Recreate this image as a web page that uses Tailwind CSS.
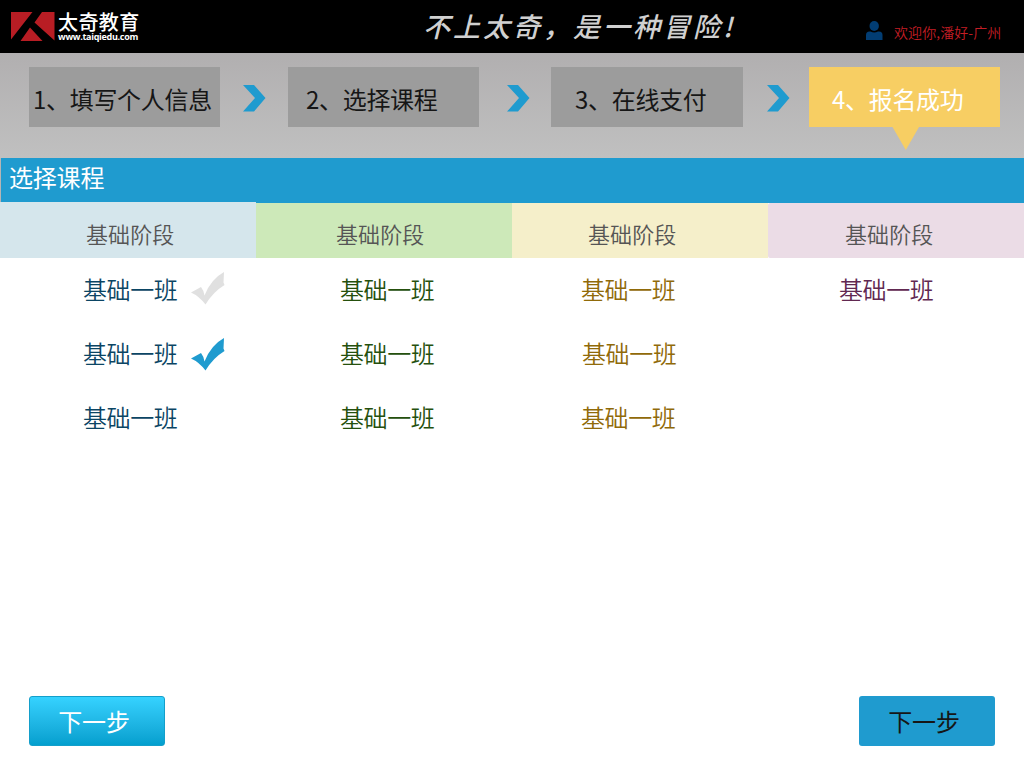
<!DOCTYPE html>
<html lang="zh-CN">
<head>
<meta charset="utf-8">
<title>太奇教育</title>
<script src="https://cdn.jsdelivr.net/npm/@tailwindcss/browser@4"></script>
</head>
<body class="bg-white">
<div class="w-[1024px] h-[768px] flex flex-col overflow-hidden whitespace-nowrap font-['Noto_Sans_CJK_SC',sans-serif]">
  <header class="h-[53px] shrink-0 bg-black flex items-start">
    <svg class="ml-[11px] mt-3 shrink-0" width="44" height="29" viewBox="0 0 44 29"><path fill="#b81d24" d="M0 0H21.500L0 27.500ZM31 0H43.500V28.500L23.500 10.500ZM19 15.500 31.500 29H9.500Z"/></svg>
    <div class="ml-[3px] mt-[11px] w-[84px] flex flex-col text-white">
      <span class="text-[20px] leading-[21px] font-medium tracking-[0.4px]">太奇教育</span>
      <span class="text-[9px] leading-[9px] font-bold tracking-[-0.3px] font-['Open_Sans',sans-serif]">www.taiqiedu.com</span>
    </div>
    <div class="ml-[281px] mt-[9px] w-[322px] text-[27px] leading-[34px] tracking-[3px] italic font-medium text-[#d0d0d0]">不上太奇，是一种冒险!</div>
    <svg class="ml-[121px] mt-[21px] shrink-0" width="17" height="19" viewBox="0 0 17 19"><ellipse cx="8.200" cy="5" rx="4.700" ry="5" fill="#023d73"/><path fill="#023d73" d="M0 19V14Q0 10.500 3.500 10.500H4.500Q8.200 12.500 12 10.500H13Q16.500 10.500 16.500 14V19Z"/></svg>
    <span class="ml-[11px] mt-[22px] text-[14px] leading-[20px] tracking-[0.1px] font-[350] text-[#c41e25]">欢迎你,潘好-广州</span>
  </header>

  <nav class="h-[105px] shrink-0 bg-linear-to-b from-[#b1afb0] to-[#c0c0c0] flex items-start pl-[29px] pt-[14px] text-[24px] text-[#161616] tracking-[-0.3px]">
    <div class="w-[191px] h-[60px] shrink-0 bg-[#9c9c9c] flex items-center pl-[4px] pt-[3px]">1、填写个人信息</div>
    <svg class="ml-[23px] mr-[22px] mt-[18px] shrink-0" width="23" height="27" viewBox="0 0 23 27"><path fill="#1f9bcf" d="M0 0H11L22.500 13 11 26.500H0L12 13Z"/></svg>
    <div class="w-[191px] h-[60px] shrink-0 bg-[#9c9c9c] flex items-center pl-[18px] pt-[3px]">2、选择课程</div>
    <svg class="ml-[28px] mr-[21px] mt-[18px] shrink-0" width="23" height="27" viewBox="0 0 23 27"><path fill="#1f9bcf" d="M0 0H11L22.500 13 11 26.500H0L12 13Z"/></svg>
    <div class="w-[192px] h-[60px] shrink-0 bg-[#9c9c9c] flex items-center pl-[24px] pt-[3px]">3、在线支付</div>
    <svg class="ml-[24px] mr-[19px] mt-[18px] shrink-0" width="23" height="27" viewBox="0 0 23 27"><path fill="#1f9bcf" d="M0 0H11L22.500 13 11 26.500H0L12 13Z"/></svg>
    <div class="relative w-[191px] h-[60px] shrink-0 bg-[#f7ce63] text-white flex items-center pl-[23px] pt-[3px]">4、报名成功
      <svg class="absolute left-[83px] top-[60px]" width="28" height="24" viewBox="0 0 28 24"><path fill="#f7ce63" d="M0.500 0H27L13.800 23Z"/></svg>
    </div>
  </nav>

  <div class="h-[45px] shrink-0 bg-[#1f9bcf] border-l border-[#b5b5b5] pl-[8px] text-[24px] leading-[37px] tracking-[-0.2px] text-white">选择课程</div>

  <main class="grid grid-cols-4 h-[438px] shrink-0 text-[24px] tracking-[-0.4px]">
    <section>
      <h2 class="h-[56px] -mt-px bg-[#d5e6ec] pl-[86px] pt-[1px] text-[22px] leading-[60px] tracking-[0.1px] font-[350] text-[#555]">基础阶段</h2>
      <ul class="pl-[83px] font-[350] text-[#0b4564]">
        <li class="h-16 flex items-center"><span class="-mt-[2px]">基础一班</span><svg class="ml-[14px] mb-[4px]" width="34" height="33" viewBox="0 0 34 33"><path fill="#e0e0e0" d="M0 20.500 10 15Q12.500 18 13.500 23.500Q20 7 33 0L32.500 10.500 33.500 13Q22 20 14.500 32.500Q8 24 0 20.500Z"/></svg></li>
        <li class="h-16 flex items-center"><span class="-mt-[2px]">基础一班</span><svg class="ml-[14px]" width="34" height="33" viewBox="0 0 34 33"><path fill="#1f9bcf" d="M0 20.500 10 15Q12.500 18 13.500 23.500Q20 7 33 0L32.500 10.500 33.500 13Q22 20 14.500 32.500Q8 24 0 20.500Z"/></svg></li>
        <li class="h-16 flex items-center pb-[2px]">基础一班</li>
      </ul>
    </section>
    <section>
      <h2 class="h-[55px] bg-[#cde9b9] pl-[80px] text-[22px] leading-[60px] tracking-[0.1px] font-[350] text-[#555]">基础阶段</h2>
      <ul class="pl-[84px] font-[350] text-[#25500d]">
        <li class="h-16 flex items-center pb-[2px]">基础一班</li>
        <li class="h-16 flex items-center pb-[2px]">基础一班</li>
        <li class="h-16 flex items-center pb-[2px]">基础一班</li>
      </ul>
    </section>
    <section>
      <h2 class="h-[55px] bg-[#f5efca] pl-[76px] text-[22px] leading-[60px] tracking-[0.1px] font-[350] text-[#555]">基础阶段</h2>
      <ul class="pl-[69px] font-[350] text-[#906a09]">
        <li class="h-16 flex items-center pb-[2px]">基础一班</li>
        <li class="h-16 flex items-center pb-[2px] pl-px">基础一班</li>
        <li class="h-16 flex items-center pb-[2px]">基础一班</li>
      </ul>
    </section>
    <section>
      <h2 class="h-[55px] rounded-l-[2px] bg-[#ebdce6] pl-[77px] text-[22px] leading-[60px] tracking-[0.1px] font-[350] text-[#555]">基础阶段</h2>
      <ul class="pl-[71px] font-[350] text-[#612851]">
        <li class="h-16 flex items-center pb-[2px]">基础一班</li>
      </ul>
    </section>
  </main>

  <footer class="mt-[55px] px-[29px] flex justify-between text-[24px] tracking-[-0.2px]">
    <button class="w-[136px] h-[50px] rounded-[3px] border border-[#149fca] bg-linear-to-b from-[#35d2ff] to-[#039fce] text-white pr-[6px]">下一步</button>
    <button class="w-[136px] h-[50px] rounded-[3px] bg-[#1f9bcf] text-[#161616] pr-[6px]">下一步</button>
  </footer>
</div>
</body>
</html>
